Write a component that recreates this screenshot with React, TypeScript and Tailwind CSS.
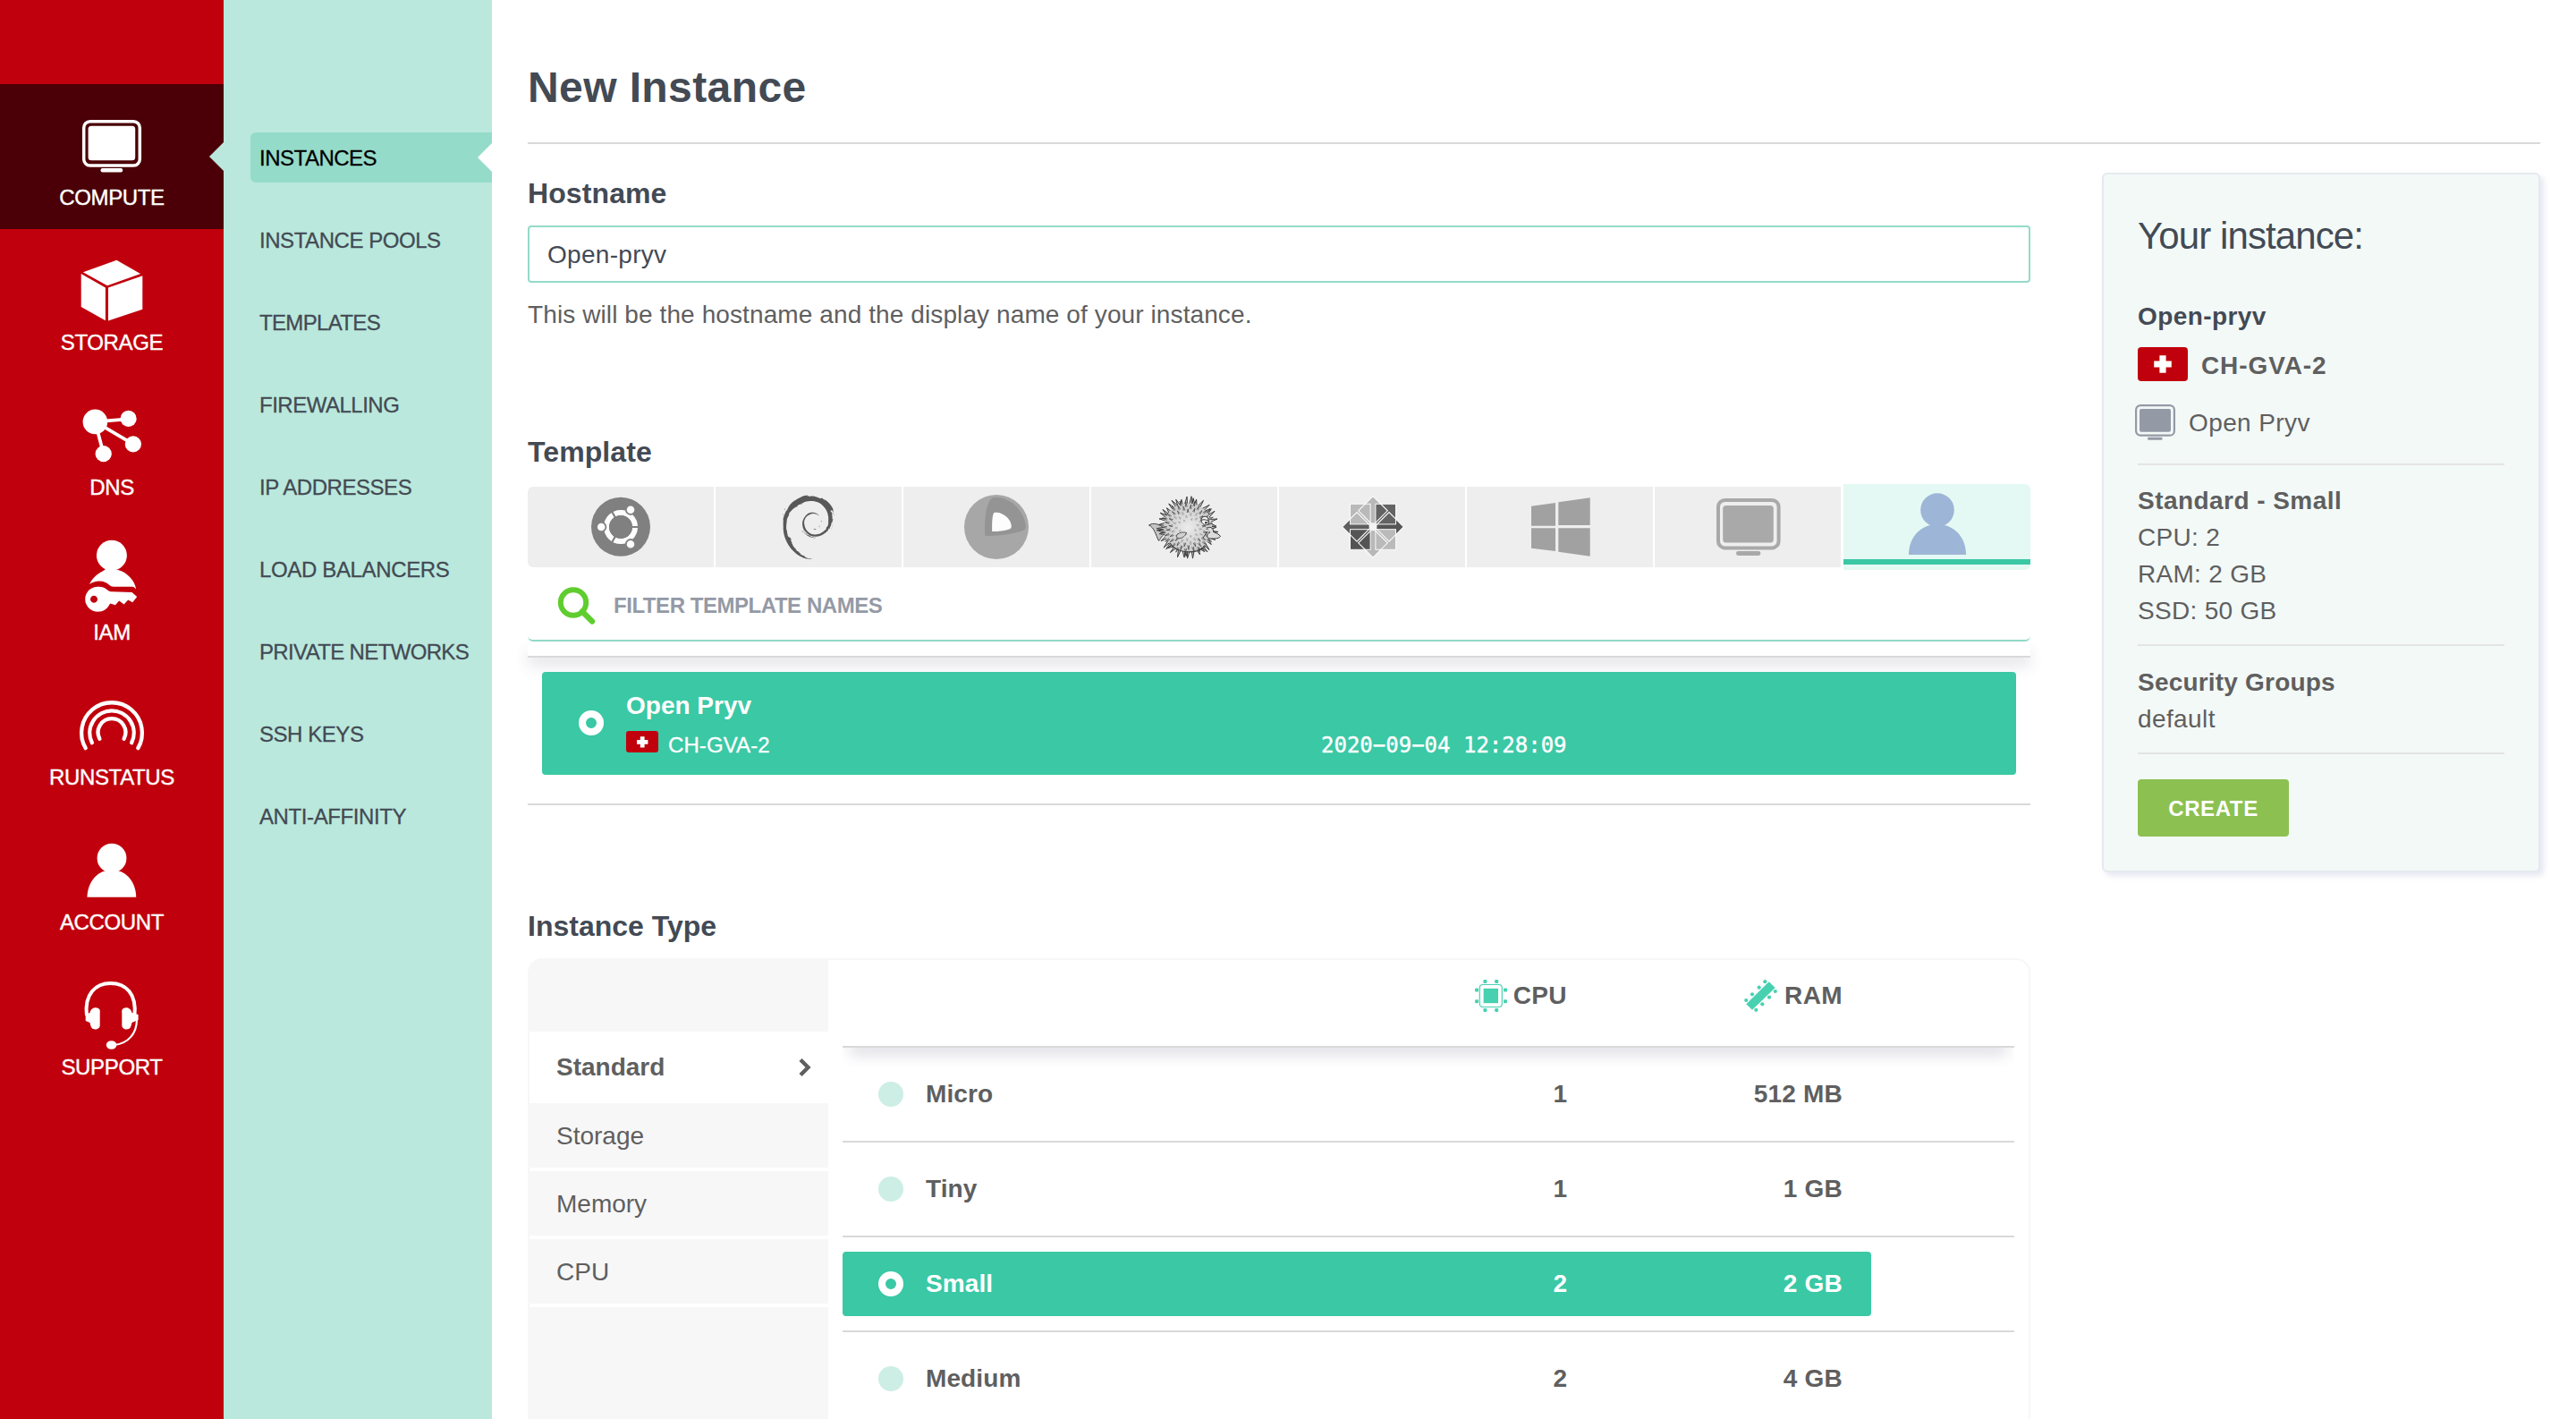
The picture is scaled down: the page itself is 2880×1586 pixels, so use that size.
import React from "react";
import { SiDebian } from "react-icons/si";

/* ---------- Sidebar icons (80 x 90 canvas) ---------- */

const ComputeIcon = () => (
  <>
    <rect x="8.7" y="21.7" width="62.6" height="49.4" rx="7" fill="none" stroke="#fff" strokeWidth="3.5" />
    <rect x="13.6" y="26.7" width="52.6" height="38.6" rx="3.5" />
    <rect x="27.5" y="74" width="24.7" height="4.4" rx="2" />
  </>
);

const StorageIcon = () => (
  <>
    <path d="M7.9 28.3 45.4 14.7 72.1 30 35 43.3Z" />
    <path d="M5.7 30 32.9 45.4V82.2L5.7 66.9Z" />
    <path d="M36 45.4 74.3 32.2V69.7L36 82.6Z" />
  </>
);

const DnsIcon = () => (
  <>
    <g stroke="#fff" strokeWidth="3.8">
      <path d="M21.4 33.4 58.6 30.4M21.4 33.4 63.9 58.4M21.4 33.4 30.7 69.1" />
    </g>
    <circle cx="21.4" cy="33.4" r="13.8" />
    <circle cx="58.6" cy="29.9" r="9.1" />
    <circle cx="63.9" cy="58.4" r="9.1" />
    <circle cx="30.7" cy="69.1" r="9.1" />
  </>
);

const IamIcon = () => (
  <>
    <ellipse cx="39.9" cy="20.8" rx="17" ry="17" />
    <path d="M33 36C30 39 20 42 15 53C20 49.5 27 48.5 33 51C36 52.5 38 55.5 42 55.8L63 55.8C65 56 66 57.5 67.1 58.6C66 49 57 39.5 47 37Z" />
    <path
      fillRule="evenodd"
      d="M34.6 59C37 61 38 61.2 40 61.3L62.5 62L68.2 67L63.2 73.2L58.2 70.6L53.6 75.4L48.2 71.5L43.9 76.2L38.2 74.5C35 80.5 31 83.6 25.4 83.6A14 14 0 1 1 25.4 55.7C29 55.7 32 56.8 34.6 59ZM20 65.7a4 4 0 1 0 .01 0Z"
    />
  </>
);

const RunstatusIcon = () => (
  <g fill="none" stroke="#fff" strokeWidth="4.3" strokeLinecap="round">
    <path d="M10.7 74.2A33.9 33.9 0 1 1 69.3 74.2" />
    <path d="M17.9 68.2A24.7 24.7 0 1 1 62.1 68.2" />
    <path d="M26.4 63.8A15.4 15.4 0 1 1 53.6 63.8" />
  </g>
);

const AccountIcon = () => (
  <>
    <ellipse cx="40" cy="35.2" rx="16.4" ry="16.4" />
    <path d="M34 49C20 52 12.5 66 12.5 78.8H67.2C67.2 66 60 52 46 49Z" />
  </>
);

const SupportIcon = () => (
  <>
    <path d="M12 49C9 25 22 13 38.6 13C56 13 68 25 65.4 49" fill="none" stroke="#fff" strokeWidth="4" />
    <path d="M15.4 46C17 40 22 39.5 25 41C27 42 27 44 26.7 46V60C26.7 64 22 65.5 18.5 63.8C16 62 16 58 15.4 57L10.7 55V48Z" />
    <path d="M62.5 46C61 40 56 39.5 53 41C51 42 51 44 51.3 46V60C51.3 64 56 65.5 59.5 63.8C62 62 62 58 62.5 57L67 55L69.6 54V48Z" />
    <path d="M68 53C68 70 58 80 43 82" fill="none" stroke="#fff" strokeWidth="2.2" />
    <ellipse cx="39.6" cy="82" rx="5.8" ry="4.8" />
  </>
);

const NAV = [
  { label: "COMPUTE", icon: <ComputeIcon />, active: true },
  { label: "STORAGE", icon: <StorageIcon /> },
  { label: "DNS", icon: <DnsIcon /> },
  { label: "IAM", icon: <IamIcon /> },
  { label: "RUNSTATUS", icon: <RunstatusIcon /> },
  { label: "ACCOUNT", icon: <AccountIcon /> },
  { label: "SUPPORT", icon: <SupportIcon /> },
];

const SUBNAV = [
  { label: "INSTANCES", spacing: "tracking-[-0.5px]" },
  { label: "INSTANCE POOLS", spacing: "tracking-[-0.45px]" },
  { label: "TEMPLATES", spacing: "tracking-[-0.65px]" },
  { label: "FIREWALLING", spacing: "tracking-[-0.5px]" },
  { label: "IP ADDRESSES", spacing: "tracking-[-0.45px]" },
  { label: "LOAD BALANCERS", spacing: "tracking-[-0.35px]" },
  { label: "PRIVATE NETWORKS", spacing: "tracking-[-0.65px]" },
  { label: "SSH KEYS", spacing: "tracking-[-0.45px]" },
  { label: "ANTI-AFFINITY", spacing: "tracking-[-0.4px]" },
];

/* ---------- Template logos (100 x 90 canvas) ---------- */

const UbuntuLogo = () => (
  <>
    <circle cx="50" cy="44.8" r="33" fill="#808080" />
    <circle cx="50" cy="45" r="16" fill="none" stroke="#fdfdfd" strokeWidth="6" />
    <path d="M50 45H71M50 45 39.5 26.8M50 45 39.5 63.2" stroke="#808080" strokeWidth="2.2" />
    <circle cx="50" cy="45" r="12.9" fill="#808080" />
    {[
      [28.2, 45],
      [61, 25.8],
      [61, 64.2],
    ].map(([x, y]) => (
      <circle key={`${x}-${y}`} cx={x} cy={y} r="5.2" fill="#fdfdfd" stroke="#808080" strokeWidth="1.8" />
    ))}
  </>
);

const CoreOsLogo = () => (
  <>
    <circle cx="50" cy="45" r="36" fill="#a7a7a7" />
    <path d="M37.3 54.7C36.6 40 37.5 22 43.3 14.5C45 12 48 11.8 51 12C68 13 81 28 82.7 43.7C83 47 82 48.3 77.7 49.8C68 53 52 55 39 54.9Z" fill="#949494" />
    <path d="M45.2 50C45 42 45.2 35 46.5 30.5C47 28.8 48.5 28.6 50.5 28.8C59 29.8 66 36 66.8 44C66.9 46.5 65.5 47.3 62.7 48C57 49.5 51 50.1 45.2 50Z" fill="#fdfdfd" />
  </>
);

/** Outward spikes around a circle, slightly uneven in length and direction. */
function spikes(cx: number, cy: number, r: number, len: number, n: number, half: number) {
  let d = "";
  for (let i = 0; i < n; i++) {
    const a = (i * Math.PI * 2) / n + 0.05 * Math.sin(i * 7.7);
    const l = len * (0.7 + 0.45 * Math.abs(Math.sin(i * 2.3)));
    const tilt = 0.06 * Math.sin(i * 5.1);
    const p = (rad: number, ang: number) =>
      `${(cx + rad * Math.cos(ang)).toFixed(1)} ${(cy + rad * Math.sin(ang)).toFixed(1)}`;
    d += `M${p(r, a - half)}L${p(r + l, a + tilt)}L${p(r, a + half)}`;
  }
  return d;
}

/** Small thorns scattered over the body on a sunflower spiral. */
function thorns(cx: number, cy: number, from: number, to: number, spread: number) {
  let d = "";
  for (let i = from; i < to; i++) {
    const a = i * 2.39996;
    const r = spread * Math.sqrt(i);
    const x = cx + r * Math.cos(a);
    const y = cy + r * Math.sin(a);
    const l = 0.8 + r * 0.2;
    const ux = Math.cos(a);
    const uy = Math.sin(a);
    const w = 0.9;
    d += `M${(x - uy * w).toFixed(1)} ${(y + ux * w).toFixed(1)}L${(x + ux * l).toFixed(1)} ${(y + uy * l).toFixed(1)}L${(x + uy * w).toFixed(1)} ${(y - ux * w).toFixed(1)}`;
  }
  return d;
}

const PufferLogo = () => (
  <>
    <defs>
      <radialGradient id="puffer">
        <stop offset="0" stopColor="#ebebeb" />
        <stop offset="1" stopColor="#cbcbcb" />
      </radialGradient>
    </defs>
    <path d="M28 47C22 41 15 40 10.5 43C17 46 18 54 21.5 60.5C24 58 24.5 54 30 52Z" fill="#c4c4c4" stroke="#444" strokeWidth="1" />
    <path d={spikes(54, 45.5, 26.5, 7.5, 42, 0.055)} fill="#c9c9c9" stroke="#3c3c3c" strokeWidth="1" />
    <circle cx="54" cy="45.5" r="27" fill="url(#puffer)" />
    <path d={thorns(54, 45.5, 34, 86, 2.75)} fill="none" stroke="#484848" strokeWidth="0.8" />
    <path d={thorns(54, 45.5, 6, 34, 2.75)} fill="none" stroke="#8a8a8a" strokeWidth="0.6" />
    <path d="M34 63C41 74 62 77 74 66" fill="none" stroke="#444" strokeWidth="1.2" />
    <path d="M41 55C43 51.5 48 50 52.5 51.5C51 55.5 47 58.5 42.5 57.5Z" fill="#d0d0d0" stroke="#444" strokeWidth="0.9" />
    <path d="M69 36C71 32 76 32.5 77 37L77 42C74 44 70 42 69 38Z" fill="#f4f4f4" stroke="#333" strokeWidth="1" />
    <path d="M68.5 37.5C72 36 75 37 77.5 38.5" stroke="#333" strokeWidth="1" fill="none" />
    <circle cx="74.3" cy="40.2" r="1.2" fill="#222" />
    <path d="M76 46C80 44 83 47 82.5 50.5C86 52 89 53 90.5 55.5C88 58.5 83 58 79 58C74 57.5 75 52 79 51" fill="#dcdcdc" stroke="#333" strokeWidth="1" />
    <path d="M76 50 71 57" stroke="#333" strokeWidth="1" />
  </>
);

const CentosLogo = () => (
  <g transform="translate(51 44.8)">
    <path d="M0-34.3 16.3-18 0-1.7-16.3-18Z" fill="#b8b8b8" />
    <path d="M0 34.3 16.3 18 0 1.7-16.3 18Z" fill="#b8b8b8" />
    <path d="M-34.3 0-18-16.3-1.7 0-18 16.3Z" fill="#5f5f5f" />
    <path d="M34.3 0 18-16.3 1.7 0 18 16.3Z" fill="#555" />
    <g stroke="#fafafa" strokeWidth="1">
      <rect x="-25.5" y="-25.5" width="22.6" height="22.6" fill="#b9b9b9" />
      <rect x="2.9" y="-25.5" width="22.6" height="22.6" fill="#636363" />
      <rect x="-25.5" y="2.9" width="22.6" height="22.6" fill="#545454" />
      <rect x="2.9" y="2.9" width="22.6" height="22.6" fill="#bababa" />
    </g>
    <g fill="none" stroke="#fafafa" strokeWidth="1.1">
      <path d="M0-34.3 16.3-18 0-1.7-16.3-18Z" />
      <path d="M0 34.3 16.3 18 0 1.7-16.3 18Z" />
      <path d="M-34.3 0-18-16.3-1.7 0-18 16.3Z" />
      <path d="M34.3 0 18-16.3 1.7 0 18 16.3Z" />
    </g>
    <circle r="4.5" fill="#f4f4f4" />
  </g>
);

const WindowsLogo = () => (
  <g fill="#a1a1a1">
    <path d="M18 21.7 45 18V43.7H18Z" />
    <path d="M48.3 17.3 83.7 12.3V43H48.3Z" />
    <path d="M18 46.3H45V72L18 68.7Z" />
    <path d="M48.3 46.3H83.7V77.7L48.3 72.7Z" />
  </g>
);

const ScreenLogo = () => (
  <g fill="#a9a9a9">
    <rect x="17" y="15" width="67.6" height="53.4" rx="7.5" fill="none" stroke="#a9a9a9" strokeWidth="4" />
    <rect x="22.2" y="21" width="56.6" height="41.4" rx="3.5" />
    <rect x="37" y="72" width="27.4" height="5" rx="2.4" />
  </g>
);

const UserLogo = () => (
  <g fill="#9db5d6">
    <circle cx="50" cy="26" r="18.8" />
    <path d="M42 43C26 47 18 61 18 76H82C82 61 74 47 58 43Z" />
  </g>
);

const TEMPLATES = [
  <UbuntuLogo />,
  <SiDebian x="14" y="9" size={72} color="#585858" />,
  <CoreOsLogo />,
  <PufferLogo />,
  <CentosLogo />,
  <WindowsLogo />,
  <ScreenLogo />,
];

/* ---------- Small shared pieces ---------- */

const RadioOn = () => <span className="block h-7 w-7 rounded-full border-8 border-white" />;

const ROWS = [
  { name: "Micro", cpu: "1", ram: "512 MB" },
  { name: "Tiny", cpu: "1", ram: "1 GB" },
  { name: "Small", cpu: "2", ram: "2 GB", selected: true },
  { name: "Medium", cpu: "2", ram: "4 GB" },
];

const CpuIcon = () => (
  <svg className="h-9 w-9" viewBox="0 0 36 36" fill="#48d1b0">
    <rect x="5.3" y="5.5" width="25" height="25" rx="3.5" fill="none" stroke="#48d1b0" strokeWidth="1.2" />
    <rect x="9.6" y="9.8" width="16.4" height="16.4" />
    {[9.4, 22.2].map((p) => (
      <g key={p}>
        <rect x={p} y="0" width="4" height="4" rx="1.2" />
        <rect x={p} y="32" width="4" height="4" rx="1.2" />
        <rect x="0" y={p} width="4" height="4" rx="1.2" />
        <rect x="32" y={p} width="4" height="4" rx="1.2" />
      </g>
    ))}
  </svg>
);

const RamIcon = () => (
  <svg className="h-9 w-[37px]" viewBox="0 0 37 36" fill="#48d1b0">
    <path d="M27.7 2.3 34.7 9 9 33.7 2.3 27.3Z" />
    {[
      [23.3, 2.2],
      [16.7, 8.7],
      [9, 16.3],
      [2.2, 23],
      [34.8, 13],
      [28, 19.7],
      [20.3, 27.3],
      [13.3, 33.8],
    ].map(([x, y]) => (
      <circle key={x} cx={x} cy={y} r="2.1" />
    ))}
  </svg>
);

function InstanceTable() {
  return (
    <div className="flex h-[520px] overflow-hidden rounded-t-2xl border-2 border-[#f7f7f7]">
      <div className="flex w-[334px] flex-col text-[28px] leading-8 text-[#5f5f5f]">
        <div className="h-20 bg-[#f7f7f7]" />
        <div className="flex h-20 items-center justify-between pl-[30px] pr-[19px] font-bold">
          <span>Standard</span>
          <svg className="h-6 w-[14px]" viewBox="0 0 14 24" fill="none" stroke="#5f5f5f" strokeWidth="4.4">
            <path d="M2 3.5 10.5 12 2 20.5" />
          </svg>
        </div>
        {["Storage", "Memory", "CPU"].map((t) => (
          <div key={t} className="mb-1 flex h-[72px] items-center bg-[#f7f7f7] pl-[30px] pt-px">
            {t}
          </div>
        ))}
        <div className="flex-1 bg-[#f7f7f7]" />
      </div>
      <div className="ml-4 flex w-[1310px] flex-col text-[28px] font-bold leading-8 text-[#5f5f5f]">
        <div className="flex h-[98px] shrink-0 items-start border-b-2 border-[#d9d9d9] pt-[22px]">
          <div className="flex w-[810px] items-center justify-end gap-[7px]">
            <CpuIcon />
            <span className="tracking-[0.4px]">CPU</span>
          </div>
          <div className="flex w-[308px] items-center justify-end gap-2">
            <RamIcon />
            <span className="tracking-[0.4px]">RAM</span>
          </div>
        </div>
        <div className="h-0 shrink-0 overflow-visible">
          <div className="h-[26px] overflow-hidden">
            <div className="mx-2 -mt-4 h-4 shadow-[0_8px_16px_rgba(60,60,100,0.17)]" />
          </div>
        </div>
        {ROWS.map((r) => (
          <div key={r.name} className="flex h-[106px] shrink-0 items-center border-b-2 border-[#d9d9d9]">
            <div
              className={
                r.selected
                  ? "flex h-[72px] w-[1150px] items-center rounded bg-[#3ac8a5] pl-10 text-white"
                  : "flex h-[72px] w-[1150px] items-center pl-10"
              }
            >
              {r.selected ? <RadioOn /> : <span className="block h-7 w-7 rounded-full bg-[#cdeee5]" />}
              <span className="ml-[25px] w-[400px] tracking-[0.1px]">{r.name}</span>
              <span className="w-[317px] text-right">{r.cpu}</span>
              <span className="w-[308px] text-right tracking-[0.2px]">{r.ram}</span>
            </div>
          </div>
        ))}
      </div>
    </div>
  );
}

function Summary() {
  return (
    <aside className="mt-8 flex h-[782px] w-[490px] flex-col rounded-md border-2 border-[#e6e9ee] bg-[#f3f9f7] px-[38px] text-[28px] leading-[41px] text-[#5f5f5f] shadow-[4px_4px_6px_rgba(200,205,225,0.45)]">
      <h2 className="mt-[45px] text-[42px] leading-[48px] tracking-[-0.9px] text-[#434a54]">Your instance:</h2>
      <strong className="mt-[45px] tracking-[0.4px] text-[#434a54]">Open-pryv</strong>
      <div className="mt-[14px] flex h-[42px] items-start">
        <svg className="h-[38px] w-14" viewBox="-28 -19 56 38">
          <rect x="-28" y="-19" width="56" height="38" rx="4" fill="#c0000c" />
          <path d="M0-9.8V9.8M-9.8 0H9.8" stroke="#fff" strokeWidth="7.2" />
        </svg>
        <strong className="ml-[15px] leading-[42px] tracking-[0.9px]">CH-GVA-2</strong>
      </div>
      <div className="mt-[22px] flex h-[42px] items-start">
        <svg className="-ml-[3px] h-10 w-[45px]" viewBox="0 0 45 40" fill="#949aa5">
          <rect x="1.1" y="1.1" width="42.8" height="33.6" rx="5" fill="none" stroke="#949aa5" strokeWidth="2.2" />
          <rect x="5" y="5" width="35" height="25.8" rx="2" />
          <rect x="14" y="36.8" width="16.6" height="3" rx="1.4" />
        </svg>
        <span className="ml-[15px] leading-[42px] tracking-[0.4px]">Open Pryv</span>
      </div>
      <hr className="mt-6 border-t-2 border-[#e4e4e4]" />
      <strong className="mt-[19px] tracking-[0.45px]">Standard - Small</strong>
      <span className="tracking-[0.3px]">CPU: 2</span>
      <span className="tracking-[0.3px]">RAM: 2 GB</span>
      <span className="tracking-[0.3px]">SSD: 50 GB</span>
      <hr className="mt-[17px] border-t-2 border-[#e4e4e4]" />
      <strong className="mt-5 tracking-[0.2px]">Security Groups</strong>
      <span className="tracking-[0.4px]">default</span>
      <hr className="mt-[17px] border-t-2 border-[#e4e4e4]" />
      <button className="mt-7 h-16 w-[169px] rounded bg-[#8cc152] pt-px text-2xl font-bold tracking-[0.6px] text-white">
        CREATE
      </button>
    </aside>
  );
}

export default function App() {
  return (
    <div
      className="flex h-[1586px] w-[2880px] overflow-hidden bg-white"
      style={{ fontFamily: '"Liberation Sans", Arial, sans-serif' }}
    >
      <nav className="flex w-[250px] flex-col bg-[#c0000c] pt-[94px]">
        {NAV.map((n) => (
          <a
            key={n.label}
            className={
              n.active
                ? "relative flex h-[162px] flex-col items-center bg-[#4a0006] pt-5"
                : "relative flex h-[162px] flex-col items-center pt-5"
            }
          >
            <svg className="h-[90px] w-20" viewBox="0 0 80 90" fill="#fff">
              {n.icon}
            </svg>
            <span className="mt-[3px] text-2xl leading-7 tracking-[-0.35px] text-white [-webkit-text-stroke:0.4px_#fff]">
              {n.label}
            </span>
            {n.active && (
              <svg className="absolute right-0 top-[65px] h-8 w-4" viewBox="0 0 16 32">
                <path d="M16 0V32L0 16Z" fill="#bae8dc" />
              </svg>
            )}
          </a>
        ))}
      </nav>

      <nav className="flex w-[300px] flex-col gap-9 bg-[#bae8dc] pl-[30px] pt-[148px]">
        {SUBNAV.map((s, i) => (
          <a
            key={s.label}
            className={
              i === 0
                ? "relative flex h-14 items-center rounded-l-md bg-[#95dbc9] pl-[10px] pt-px text-2xl leading-7 text-black [-webkit-text-stroke:0.3px_#000]"
                : "flex h-14 items-center whitespace-nowrap pl-[10px] pt-px text-2xl leading-7 text-[#434a54] [-webkit-text-stroke:0.3px_#434a54]"
            }
          >
            <span className={s.spacing}>{s.label}</span>
            {i === 0 && (
              <svg className="absolute right-0 top-3 h-8 w-4" viewBox="0 0 16 32">
                <path d="M16 0V32L0 16Z" fill="#fff" />
              </svg>
            )}
          </a>
        ))}
      </nav>

      <main className="flex w-[2290px] flex-col pl-10 pt-[70px]">
        <h1 className="text-5xl font-bold leading-[56px] tracking-[0.4px] text-[#434a54]">New Instance</h1>
        <hr className="mt-[33px] border-t-2 border-[#d9d9d9]" />
        <div className="flex items-start gap-20">
          <div className="flex w-[1680px] flex-col">
            <label className="mt-[35px] text-[32px] font-bold leading-10 tracking-[0.1px] text-[#434a54]">Hostname</label>
            <div className="mt-4 flex h-16 items-center rounded border-2 border-[#93dbc8] pl-5 pt-0.5 text-[28px] leading-8 tracking-[0.3px] text-[#434a54]">
              Open-pryv
            </div>
            <p className="mt-5 text-[28px] leading-8 tracking-[0.1px] text-[#5f5f5f]">
              This will be the hostname and the display name of your instance.
            </p>

            <h3 className="mt-[117px] text-[32px] font-bold leading-10 tracking-[0.1px] text-[#434a54]">Template</h3>
            <div className="mt-4 flex h-24 items-center">
              {TEMPLATES.map((logo, i) => (
                <div
                  key={i}
                  className={
                    i === 0
                      ? "mr-0.5 flex h-[90px] w-[208px] justify-center rounded-l-md bg-[#eee]"
                      : "mr-0.5 flex h-[90px] w-[208px] justify-center bg-[#eee]"
                  }
                >
                  <svg className="h-[90px] w-[100px]" viewBox="0 0 100 90">
                    {logo}
                  </svg>
                </div>
              ))}
              <div className="ml-px flex h-24 w-[209px] flex-col items-center rounded-r-md bg-[#e4f9f3]">
                <svg className="mt-[3px] h-[81px] w-[100px]" viewBox="0 0 100 81">
                  <UserLogo />
                </svg>
                <div className="h-1.5 w-full bg-[#3ac8a5]" />
              </div>
            </div>

            <div className="flex h-20 items-center rounded-b-md border-b-2 border-[#93dbc8] pl-[30px] pt-0.5">
              <svg className="h-12 w-12" viewBox="0 0 48 48" fill="none" stroke="#5fcd2f">
                <circle cx="21" cy="20.5" r="14.2" strokeWidth="6" />
                <path d="M31 30.5 42 41.5" strokeWidth="6.4" strokeLinecap="round" />
              </svg>
              <span className="ml-[18px] text-2xl font-bold leading-7 tracking-[-0.45px] text-[#949aa5]">
                FILTER TEMPLATE NAMES
              </span>
            </div>
            <div className="h-[18px] border-b-2 border-[#d9d9d9] shadow-[0_10px_16px_rgba(60,60,100,0.12)]" />

            <div className="relative mx-4 mt-4 flex h-[115px] rounded bg-[#3ac8a5] text-white">
              <div className="ml-[41px] mt-[43px]">
                <RadioOn />
              </div>
              <div className="ml-[25px] mt-[21px] w-[777px]">
                <div className="text-[28px] font-bold leading-[34px]">Open Pryv</div>
                <div className="mt-[11px] flex h-7 items-start">
                  <svg className="h-6 w-9" viewBox="0 0 36 24">
                    <rect width="36" height="24" rx="3" fill="#c0000c" />
                    <path d="M18.2 6.2V18.4M12 12.3H24.4" stroke="#fff" strokeWidth="4.8" />
                  </svg>
                  <span className="ml-[11px] mt-0.5 text-2xl leading-7 tracking-[0.1px] [-webkit-text-stroke:0.3px_#fff]">
                    CH-GVA-2
                  </span>
                </div>
              </div>
              <div
                className="mt-[68px] text-2xl leading-7 [-webkit-text-stroke:0.4px_#fff]"
                style={{ fontFamily: '"DejaVu Sans Mono", monospace' }}
              >
                2020−09−04 12:28:09
              </div>
            </div>
            <hr className="mt-8 border-t-2 border-[#d9d9d9]" />

            <h3 className="mt-[115px] text-[32px] font-bold leading-10 text-[#434a54]">Instance Type</h3>
            <div className="mt-4">
              <InstanceTable />
            </div>
          </div>
          <Summary />
        </div>
      </main>
    </div>
  );
}
